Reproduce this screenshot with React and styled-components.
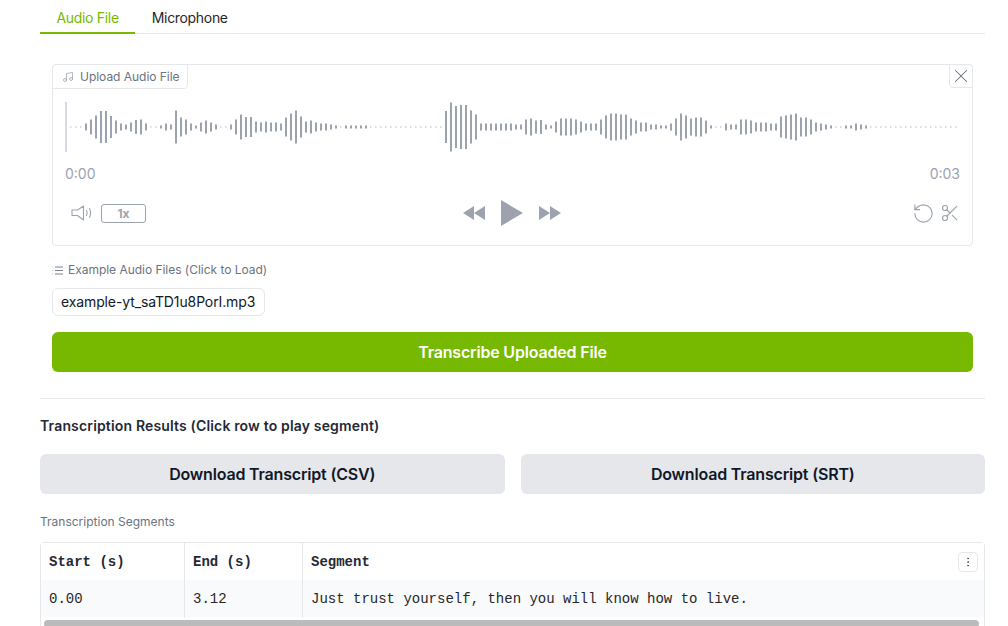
import React from 'react';
import styled, { createGlobalStyle } from 'styled-components';
import { Music, X, RotateCcw, Scissors, EllipsisVertical } from 'lucide-react';

const GREEN = '#76b900';

const GlobalStyle = createGlobalStyle`
  html, body { margin: 0; padding: 0; height: 626px; overflow: hidden; background: #fff; }
  body { font-family: Inter, "Noto Sans", sans-serif; color: #111827; }
  * { box-sizing: border-box; }
`;

const Page = styled.div`
  width: 1008px;
  height: 626px;
  overflow: hidden;
  padding: 0 23px 0 40px;
`;

const Tabs = styled.div`
  display: flex;
  height: 34px;
  border-bottom: 1px solid #e5e7eb;
`;

const Tab = styled.div`
  height: 34px;
  padding: 0 16.5px;
  font-size: 14px;
  letter-spacing: -0.32px;
  line-height: 36px;
  color: ${p => (p.$active ? GREEN : '#27272a')};
  border-bottom: 2px solid ${p => (p.$active ? GREEN : 'transparent')};
`;

const Inset = styled.div`
  padding: 0 12px;
`;

const AudioPanel = styled.div`
  position: relative;
  height: 182px;
  margin-top: 30px;
  padding: 37px 12px 0;
  border: 1px solid #e5e7eb;
  border-radius: 4px;
`;

const BlockLabel = styled.div`
  position: absolute;
  top: -1px;
  left: -1px;
  display: flex;
  align-items: center;
  gap: 6px;
  height: 25px;
  padding: 0 7px 0 9px;
  font-size: 12px;
  letter-spacing: -0.03px;
  color: #6b7280;
  background: #fff;
  border: 1px solid #e5e7eb;
  border-radius: 4px 0 4px 0;
`;

const CloseButton = styled.div`
  position: absolute;
  top: -1px;
  right: -1px;
  display: flex;
  align-items: center;
  justify-content: center;
  width: 24px;
  height: 24px;
  color: #6b7280;
  background: #fff;
  border: 1px solid #e5e7eb;
  border-radius: 0 4px 0 4px;
`;

const WaveSvg = styled.svg`
  display: block;
  width: 895px;
  height: 50px;
`;

const TimeRow = styled.div`
  display: flex;
  justify-content: space-between;
  margin-top: 13px;
  font-size: 14px;
  line-height: 17px;
  color: #9ca3af;
`;

const Controls = styled.div`
  display: grid;
  grid-template-columns: 1fr auto 1fr;
  align-items: center;
  height: 26px;
  margin-top: 18px;
  padding: 0 0 0 6px;
  color: #9ca3af;
`;

const LeftControls = styled.div`
  display: flex;
  align-items: center;
  gap: 9px;
`;

const SpeedButton = styled.div`
  width: 45px;
  height: 19px;
  font-size: 12px;
  font-weight: 700;
  line-height: 17px;
  text-align: center;
  color: #9ca3af;
  border: 1px solid #9ca3af;
  border-radius: 3px;
`;

const CenterControls = styled.div`
  display: flex;
  align-items: center;
  gap: 16px;
  margin-left: -7px;
`;

const RightControls = styled.div`
  display: flex;
  align-items: center;
  justify-content: flex-end;
  gap: 5px;
`;

const ExamplesLabel = styled.div`
  display: flex;
  align-items: center;
  gap: 5px;
  margin-top: 16px;
  font-size: 12px;
  letter-spacing: -0.03px;
  line-height: 16px;
  color: #6b7280;
`;

const ExampleChip = styled.div`
  display: inline-block;
  height: 28px;
  margin-top: 10px;
  padding: 0 9px 0 8px;
  font-size: 14px;
  letter-spacing: -0.12px;
  line-height: 26px;
  color: #111827;
  border: 1px solid #e5e7eb;
  border-radius: 6px;
`;

const Button = styled.div`
  height: 40px;
  font-size: 16px;
  font-weight: 600;
  letter-spacing: -0.18px;
  line-height: 40px;
  text-align: center;
  border-radius: 6px;
  color: ${p => (p.$primary ? '#fff' : '#111827')};
  background: ${p => (p.$primary ? GREEN : '#e5e7eb')};
`;

const TranscribeButton = styled(Button)`
  margin-top: 16px;
`;

const Divider = styled.div`
  height: 1px;
  margin-top: 26px;
  background: #e5e7eb;
`;

const Heading = styled.div`
  margin-top: 17px;
  font-size: 14px;
  font-weight: 600;
  letter-spacing: 0.16px;
  line-height: 20px;
  color: #1f2937;
`;

const DownloadRow = styled.div`
  display: grid;
  grid-template-columns: 1fr 1fr;
  gap: 16px;
  margin-top: 18px;
`;

const TableLabel = styled.div`
  margin-top: 20px;
  font-size: 12px;
  line-height: 16px;
  color: #6b7280;
`;

const TableWrap = styled.div`
  position: relative;
  height: 100px;
  margin-top: 12px;
  border: 1px solid #e5e7eb;
  border-radius: 4px;
`;

const TableRow = styled.div`
  display: grid;
  grid-template-columns: 144px 118px 1fr;
  height: 37px;
  background: ${p => (p.$shaded ? '#f9fafb' : '#fff')};
`;

const Cell = styled.div`
  padding: 0 8px;
  font-family: "Liberation Mono", "DejaVu Sans Mono", monospace;
  font-size: 14px;
  font-weight: ${p => (p.$head ? 700 : 400)};
  line-height: 38px;
  color: ${p => (p.$head ? '#1f2937' : '#27272a')};
  border-right: ${p => (p.$last ? 'none' : '1px solid #e5e7eb')};
`;

const MenuButton = styled.div`
  position: absolute;
  top: 9px;
  right: 6px;
  display: flex;
  align-items: center;
  justify-content: center;
  width: 20px;
  height: 20px;
  color: #374151;
  background: #fff;
  border: 1px solid #e5e7eb;
  border-radius: 4px;
`;

const Scrollbar = styled.div`
  position: absolute;
  top: 77px;
  left: 3px;
  right: 5px;
  height: 8px;
  background: #bbbbbb;
  border-radius: 4px;
`;

const BARS = [
  0, 0, 0, 7, 15, 23, 32, 32, 22, 13, 7, 5, 9, 14, 15, 7, 0, 0, 3, 7, 5, 33, 19, 15, 7, 3, 9, 13, 9, 5, 0, 0, 5, 15, 25, 20, 20, 11,
  9, 11, 9, 9, 7, 19, 27, 33, 21, 11, 13, 9, 7, 7, 5, 3, 0, 3, 3, 3, 3, 3,
  0, 0, 0, 0, 0, 0, 0, 0, 0, 0, 0, 0, 0, 0, 0,
  32, 49, 42, 44, 44, 33, 25, 7, 7, 7, 7, 7, 7, 7, 5, 5, 15, 17, 13, 14, 5, 3, 11, 17, 17, 17, 15, 11, 7, 7, 7, 15, 23, 27, 27, 25, 25, 17, 13, 9, 9, 5, 5, 3, 3, 7, 17, 27, 23, 17, 19,
  19, 13, 3, 0, 0, 7, 5, 5, 15, 15, 13, 9, 9, 9, 7, 7, 21, 23, 25, 27, 19, 19, 15, 9, 7, 5, 3, 0, 0, 3, 3, 7, 5, 3,
  0, 0, 0, 0, 0, 0, 0, 0, 0, 0, 0, 0, 0, 0, 0, 0, 0, 0,
];

const Waveform = () => (
  <WaveSvg viewBox="0 0 895 50">
    <rect x="0" y="0" width="2" height="50" fill="#ddd6ea" />
    {BARS.map((h, i) => {
      const x = 5 + i * 5;
      return h === 0
        ? <rect key={i} x={x} y="24.5" width="1.5" height="1" fill="#b4b9c3" />
        : <rect key={i} x={x} y={25 - h / 2} width="2" height={h} fill="#9ca3af" />;
    })}
  </WaveSvg>
);

const VolumeIcon = () => (
  <svg width="21" height="16" viewBox="0 0 21 16" fill="none" stroke="#9ca3af" strokeWidth="1.1" strokeLinejoin="round" strokeLinecap="round">
    <path d="M1 5h5.5L12.5 1v14l-6-4.5H1z" />
    <path d="M15.5 5.5c.8 1.5.8 3.5 0 5" />
    <path d="M18.5 3.5c1.4 2.8 1.4 6.2 0 9" />
  </svg>
);

const RewindIcon = () => (
  <svg width="22" height="14" viewBox="0 0 22 14" fill="#9ca3af">
    <path d="M0 7 11 0v14z" />
    <path d="M11 7 22 0v14z" />
  </svg>
);

const PlayIcon = () => (
  <svg width="22" height="26" viewBox="0 0 22 26" fill="#9ca3af">
    <path d="M0 0 22 13 0 26z" />
  </svg>
);

const ForwardIcon = () => (
  <svg width="22" height="14" viewBox="0 0 22 14" fill="#9ca3af">
    <path d="M0 0 11 7 0 14z" />
    <path d="M11 0 22 7 11 14z" />
  </svg>
);

const ListIcon = () => (
  <svg width="11" height="9" viewBox="0 0 11 9" fill="none" stroke="#6b7280" strokeWidth="0.9">
    <path d="M3 1h8M3 4.5h8M3 8h8" />
    <path d="M0 1h1.2M0 4.5h1.2M0 8h1.2" stroke="#b4b9c3" />
  </svg>
);

const App = () => (
  <Page>
    <GlobalStyle />
    <Tabs>
      <Tab $active>Audio File</Tab>
      <Tab>Microphone</Tab>
    </Tabs>
    <Inset>
      <AudioPanel>
        <BlockLabel>
          <Music size={12} color="#9ca3af" strokeWidth={1.5} />
          Upload Audio File
        </BlockLabel>
        <CloseButton><X size={22} strokeWidth={1.1} /></CloseButton>
        <Waveform />
        <TimeRow>
          <span>0:00</span>
          <span>0:03</span>
        </TimeRow>
        <Controls>
          <LeftControls>
            <VolumeIcon />
            <SpeedButton>1x</SpeedButton>
          </LeftControls>
          <CenterControls>
            <RewindIcon />
            <PlayIcon />
            <ForwardIcon />
          </CenterControls>
          <RightControls>
            <RotateCcw size={23} strokeWidth={1.2} />
            <Scissors size={20} strokeWidth={1.4} />
          </RightControls>
        </Controls>
      </AudioPanel>
      <ExamplesLabel>
        <ListIcon />
        Example Audio Files (Click to Load)
      </ExamplesLabel>
      <ExampleChip>example-yt_saTD1u8PorI.mp3</ExampleChip>
      <TranscribeButton $primary>Transcribe Uploaded File</TranscribeButton>
    </Inset>
    <Divider />
    <Heading>Transcription Results (Click row to play segment)</Heading>
    <DownloadRow>
      <Button>Download Transcript (CSV)</Button>
      <Button>Download Transcript (SRT)</Button>
    </DownloadRow>
    <TableLabel>Transcription Segments</TableLabel>
    <TableWrap>
      <TableRow>
        <Cell $head>Start (s)</Cell>
        <Cell $head>End (s)</Cell>
        <Cell $head $last>Segment</Cell>
      </TableRow>
      <TableRow $shaded>
        <Cell>0.00</Cell>
        <Cell>3.12</Cell>
        <Cell $last>Just trust yourself, then you will know how to live.</Cell>
      </TableRow>
      <MenuButton><EllipsisVertical size={12} strokeWidth={1.5} /></MenuButton>
      <Scrollbar />
    </TableWrap>
  </Page>
);

export default App;
